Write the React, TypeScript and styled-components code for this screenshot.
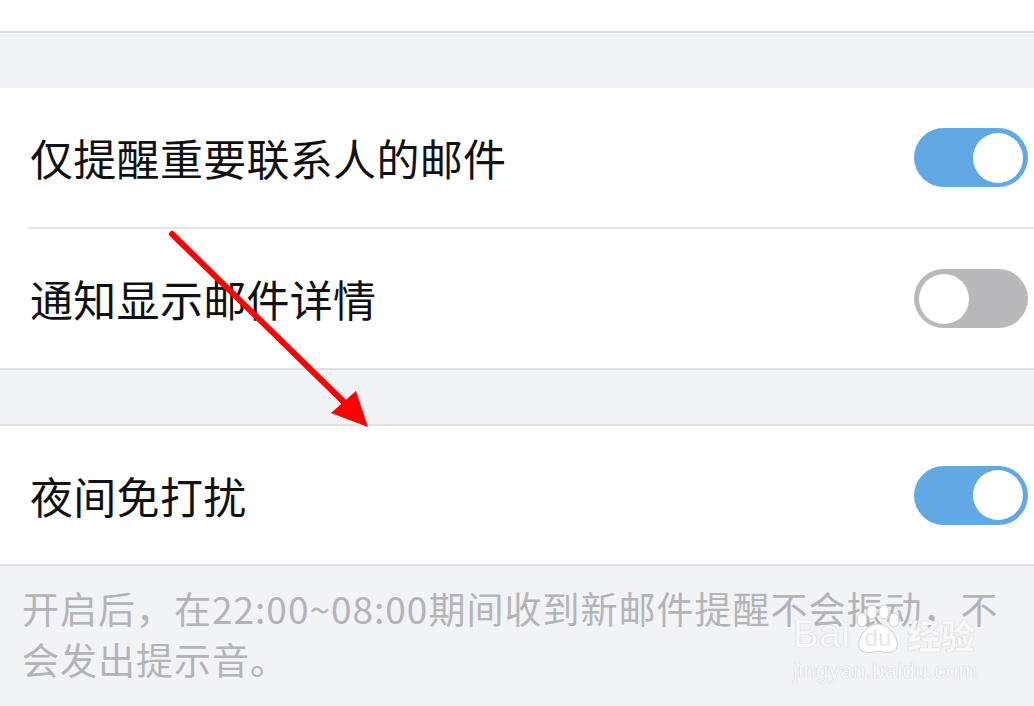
import React from "react";
import styled, { createGlobalStyle } from "styled-components";

const GlobalStyle = createGlobalStyle`
  html, body {
    margin: 0;
    padding: 0;
    background: #f2f3f7;
  }
  body {
    font-family: "Noto Sans CJK SC", "Noto Sans", sans-serif;
  }
`;

const Page = styled.div`
  position: relative;
  width: 1034px;
  height: 706px;
  overflow: hidden;
  background: #f2f3f7;
  display: flex;
  flex-direction: column;
`;

const TopBlock = styled.div`
  height: 31px;
  background: #ffffff;
  border-bottom: 2px solid #dcdcde;
  flex-shrink: 0;
`;

const Gap = styled.div<{ $h: number }>`
  height: ${(p) => p.$h}px;
  flex-shrink: 0;
`;

const Group = styled.div<{ $top?: boolean }>`
  background: #ffffff;
  border-top: ${(p) => (p.$top ? "2px solid #e0e0e2" : "none")};
  border-bottom: 2px solid #e0e0e2;
  flex-shrink: 0;
`;

const Row = styled.div<{ $h: number }>`
  height: ${(p) => p.$h}px;
  display: flex;
  align-items: center;
  justify-content: space-between;
  padding: 0 6px 0 30px;
`;

const Label = styled.span`
  font-size: 43px;
  color: #111111;
  line-height: 1;
  letter-spacing: 0.3px;
`;

const Divider = styled.div`
  height: 2px;
  margin-left: 28px;
  background: #e3e3e5;
`;

const Track = styled.div<{ $on: boolean }>`
  width: 114px;
  height: 59px;
  box-sizing: border-box;
  border-radius: 30px;
  padding: 4px 5px;
  display: flex;
  align-items: center;
  justify-content: ${(p) => (p.$on ? "flex-end" : "flex-start")};
  background: ${(p) => (p.$on ? "#60a9e5" : "#b9b9bb")};
`;

const Knob = styled.div`
  width: 50px;
  height: 50px;
  border-radius: 50%;
  background: #ffffff;
`;

const Note = styled.div`
  flex: 1;
  padding: 17px 0 0 22px;
  font-size: 37px;
  line-height: 51px;
  letter-spacing: 1px;
  color: #b4b4b6;
`;

const NoteLine = styled.div`
  white-space: nowrap;
`;

const Arrow = styled.svg`
  position: absolute;
  left: 0;
  top: 0;
  pointer-events: none;
`;

const Watermark = styled.div`
  position: absolute;
  left: 793px;
  top: 612px;
  display: flex;
  flex-direction: column;
  align-items: flex-start;
  color: rgba(255, 255, 255, 0.9);
  text-shadow: 0 0 1px #c9c9cc, 0 0 1px #c9c9cc;
  font-family: "Liberation Sans", Arial, sans-serif;
`;

const MarkTop = styled.div`
  display: flex;
  align-items: center;
  height: 44px;
`;

const BaiText = styled.span`
  font-size: 38px;
  font-weight: 400;
  letter-spacing: 1px;
`;

const Paw = styled.span`
  position: relative;
  display: inline-flex;
  align-items: center;
  justify-content: center;
  width: 50px;
  height: 40px;
  margin: 0 4px 0 2px;
`;

const PawSvg = styled.svg`
  position: absolute;
  left: 0;
  top: -10px;
`;

const DuText = styled.span`
  position: relative;
  font-size: 24px;
  color: rgba(230, 230, 232, 0.95);
  text-shadow: none;
  margin-top: 8px;
`;

const JingYan = styled.span`
  font-family: "Noto Sans CJK SC", sans-serif;
  font-size: 34px;
  font-weight: 700;
`;

const Domain = styled.div`
  font-size: 22px;
  letter-spacing: 0.4px;
  margin-top: 2px;
`;

function Toggle({ on }: { on: boolean }) {
  return (
    <Track $on={on}>
      <Knob />
    </Track>
  );
}

export default function App() {
  return (
    <>
      <GlobalStyle />
      <Page>
        <TopBlock />
        <Gap $h={55} />
        <Group>
          <Row $h={139}>
            <Label>仅提醒重要联系人的邮件</Label>
            <Toggle on />
          </Row>
          <Divider />
          <Row $h={139}>
            <Label>通知显示邮件详情</Label>
            <Toggle on={false} />
          </Row>
        </Group>
        <Gap $h={54} />
        <Group $top>
          <Row $h={138}>
            <Label>夜间免打扰</Label>
            <Toggle on />
          </Row>
        </Group>
        <Note>
          <NoteLine>开启后，在22:00~08:00期间收到新邮件提醒不会振动，不</NoteLine>
          <NoteLine>会发出提示音。</NoteLine>
        </Note>

        <Watermark>
          <MarkTop>
            <BaiText>Bai</BaiText>
            <Paw>
              <PawSvg width="50" height="52" viewBox="0 0 50 52">
                <g fill="rgba(255,255,255,0.92)" stroke="#cfcfd2" strokeWidth="1">
                  <ellipse cx="9" cy="16" rx="5" ry="7" />
                  <ellipse cx="19" cy="8" rx="5" ry="7" />
                  <ellipse cx="31" cy="8" rx="5" ry="7" />
                  <ellipse cx="41" cy="16" rx="5" ry="7" />
                  <path d="M25 20 C 14 20, 4 34, 6 43 C 8 50, 18 49, 25 47 C 32 49, 42 50, 44 43 C 46 34, 36 20, 25 20 Z" />
                </g>
              </PawSvg>
              <DuText>du</DuText>
            </Paw>
            <JingYan>经验</JingYan>
          </MarkTop>
          <Domain>jingyan.baidu.com</Domain>
        </Watermark>

        <Arrow width="1034" height="706" viewBox="0 0 1034 706">
          <line x1="172" y1="234" x2="350" y2="408" stroke="#ff0000" strokeWidth="6" strokeLinecap="round" />
          <polygon points="368,427 331,413 356,391" fill="#ff0000" />
        </Arrow>
      </Page>
    </>
  );
}
